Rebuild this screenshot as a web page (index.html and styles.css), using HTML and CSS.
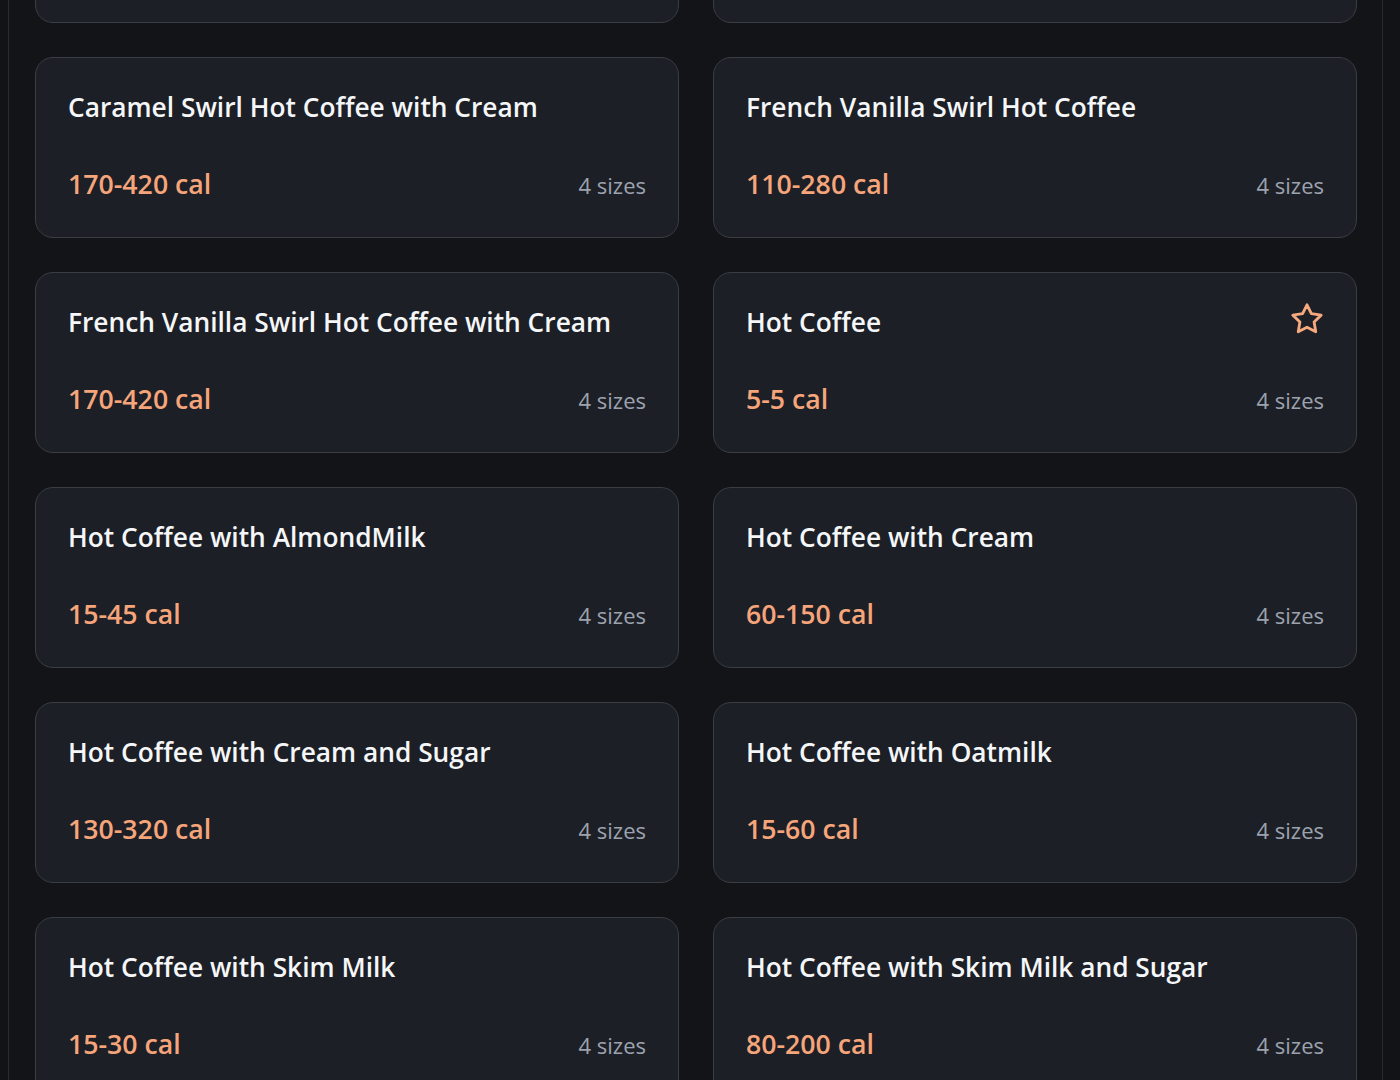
FILE: index.html
```html
<!DOCTYPE html>
<html lang="en">
<head>
<meta charset="utf-8">
<title>Hot Coffee Menu</title>
<link rel="stylesheet" href="styles.css">
</head>
<body>
<main class="panel">
  <div class="grid">
    <article class="card card-offscreen" aria-hidden="true"></article>
    <article class="card card-offscreen" aria-hidden="true"></article>

    <article class="card">
      <div class="card-head"><h3 class="title">Caramel Swirl Hot Coffee with Cream</h3></div>
      <div class="card-foot"><span class="cal">170-420 cal</span><span class="sizes">4 sizes</span></div>
    </article>
    <article class="card">
      <div class="card-head"><h3 class="title">French Vanilla Swirl Hot Coffee</h3></div>
      <div class="card-foot"><span class="cal">110-280 cal</span><span class="sizes">4 sizes</span></div>
    </article>

    <article class="card">
      <div class="card-head"><h3 class="title">French Vanilla Swirl Hot Coffee with Cream</h3></div>
      <div class="card-foot"><span class="cal">170-420 cal</span><span class="sizes">4 sizes</span></div>
    </article>
    <article class="card">
      <div class="card-head">
        <h3 class="title">Hot Coffee</h3>
        <svg class="star" viewBox="0 0 24 24" fill="none" stroke="currentColor" stroke-width="2" stroke-linecap="round" stroke-linejoin="round" aria-label="Favorite"><polygon points="12 2 15.09 8.26 22 9.27 17 14.14 18.18 21.02 12 17.77 5.82 21.02 7 14.14 2 9.27 8.91 8.26 12 2"/></svg>
      </div>
      <div class="card-foot"><span class="cal">5-5 cal</span><span class="sizes">4 sizes</span></div>
    </article>

    <article class="card">
      <div class="card-head"><h3 class="title">Hot Coffee with AlmondMilk</h3></div>
      <div class="card-foot"><span class="cal">15-45 cal</span><span class="sizes">4 sizes</span></div>
    </article>
    <article class="card">
      <div class="card-head"><h3 class="title">Hot Coffee with Cream</h3></div>
      <div class="card-foot"><span class="cal">60-150 cal</span><span class="sizes">4 sizes</span></div>
    </article>

    <article class="card">
      <div class="card-head"><h3 class="title">Hot Coffee with Cream and Sugar</h3></div>
      <div class="card-foot"><span class="cal">130-320 cal</span><span class="sizes">4 sizes</span></div>
    </article>
    <article class="card">
      <div class="card-head"><h3 class="title">Hot Coffee with Oatmilk</h3></div>
      <div class="card-foot"><span class="cal">15-60 cal</span><span class="sizes">4 sizes</span></div>
    </article>

    <article class="card">
      <div class="card-head"><h3 class="title">Hot Coffee with Skim Milk</h3></div>
      <div class="card-foot"><span class="cal">15-30 cal</span><span class="sizes">4 sizes</span></div>
    </article>
    <article class="card">
      <div class="card-head"><h3 class="title">Hot Coffee with Skim Milk and Sugar</h3></div>
      <div class="card-foot"><span class="cal">80-200 cal</span><span class="sizes">4 sizes</span></div>
    </article>
  </div>
</main>
</body>
</html>
```
FILE: styles.css
```css
* { box-sizing: border-box; }

html, body {
  margin: 0;
  padding: 0;
  background: #111317;
  height: 100%;
  overflow: hidden;
}

body {
  font-family: "Open Sans", "Noto Sans", "DejaVu Sans", sans-serif;
  color: #f3f4f6;
}

.panel {
  margin-left: 8px;
  width: 1375px;
  min-height: 100%;
  background: #121418;
  border-left: 1px solid #272a30;
  border-right: 1px solid #272a30;
  padding: 0 25px 0 26px;
}

.grid {
  display: grid;
  grid-template-columns: 644px 644px;
  column-gap: 34px;
  row-gap: 34px;
  margin-top: -158px;
}

.card {
  background: #1c1f26;
  border: 1px solid #3a3d44;
  border-radius: 18px;
  padding: 29px 32px 32px 32px;
  display: flex;
  flex-direction: column;
  gap: 35px;
  height: 181px;
}

.card-head {
  display: flex;
  justify-content: space-between;
  align-items: flex-start;
}

.title {
  margin: 0;
  font-size: 26.3px;
  font-weight: 600;
  line-height: 41px;
  color: #f5f6f8;
}

.star {
  width: 34px;
  height: 34px;
  color: #f6a97f;
  flex: none;
}

.card-foot {
  display: flex;
  justify-content: space-between;
  align-items: baseline;
}

.cal {
  font-size: 26.7px;
  font-weight: 600;
  line-height: 42px;
  color: #f6a57b;
}

.sizes {
  font-size: 22px;
  color: #9ca3af;
}
```
